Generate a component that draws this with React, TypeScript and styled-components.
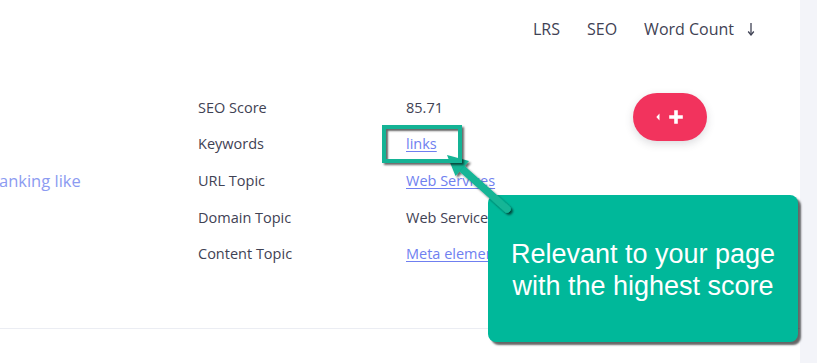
import React from "react";
import styled, { createGlobalStyle } from "styled-components";

const Global = createGlobalStyle`
  html, body { margin: 0; padding: 0; background: #ffffff; }
  body { font-family: "Open Sans", "Noto Sans", sans-serif; overflow: hidden; }
`;

const Page = styled.div`
  position: relative;
  display: flex;
  width: 817px;
  height: 363px;
  overflow: hidden;
  background: #ffffff;
`;

const Main = styled.div`
  width: 800px;
  display: flex;
  flex-direction: column;
`;

const Strip = styled.div`
  flex: 1;
  background: #f3f4f9;
`;

const Header = styled.div`
  height: 58px;
  display: flex;
  align-items: center;
  gap: 27px;
  padding-left: 533px;
  color: #3f4254;
  font-size: 16px;
`;

const HeadItem = styled.span`
  display: inline-flex;
  align-items: center;
  gap: 12px;
  white-space: nowrap;
`;

const Card = styled.div`
  display: grid;
  grid-template-columns: 198px 208px 227px 74px 1fr;
  align-items: start;
  align-content: start;
  padding-top: 31px;
  height: 271px;
  box-sizing: border-box;
  border-bottom: 1px solid #ebedf3;
`;

const Lead = styled.div`
  align-self: center;
  margin-left: -1px;
  font-size: 16.5px;
  color: #8c9bf1;
  white-space: nowrap;
`;

const Details = styled.div`
  grid-column: 2 / span 2;
  display: grid;
  grid-template-columns: 208px 1fr;
  grid-auto-rows: 36.6px;
  align-items: center;
  font-size: 14.5px;
  color: #3f4254;
`;

const Label = styled.span`
  white-space: nowrap;
`;

const Value = styled.span<{ $link?: boolean }>`
  white-space: nowrap;
  color: ${(p) => (p.$link ? "#6f7ff0" : "#3f4254")};
  text-decoration: ${(p) => (p.$link ? "underline" : "none")};
  text-underline-offset: 2px;
`;

const Actions = styled.div`
  margin-top: 4px;
`;

const PillButton = styled.button`
  width: 74px;
  height: 48px;
  border: none;
  border-radius: 24px;
  background: #f2335d;
  box-shadow: 0 3px 8px rgba(60, 60, 80, 0.18);
  display: flex;
  align-items: center;
  justify-content: center;
  padding: 0;
  cursor: pointer;
`;

const Callout = styled.div`
  position: absolute;
  left: 488px;
  top: 195px;
  width: 310px;
  height: 147px;
  border-radius: 8px;
  background: #00b89a;
  box-shadow: 3px 3px 2px rgba(0, 0, 0, 0.6);
  display: flex;
  align-items: center;
  justify-content: center;
  text-align: center;
  color: #ffffff;
  font-family: "Liberation Sans", Arial, sans-serif;
  font-size: 27px;
  line-height: 32px;
  padding-top: 2px;
  box-sizing: border-box;
`;

const Highlight = styled.div`
  position: absolute;
  left: 382px;
  top: 125px;
  width: 80px;
  height: 38px;
  box-sizing: border-box;
  border: 4px solid #14b395;
  box-shadow: 2px 2px 2px rgba(0, 0, 0, 0.6), inset 2px 2px 2px rgba(0, 0, 0, 0.6);
`;

const ArrowLayer = styled.svg`
  position: absolute;
  left: 0;
  top: 0;
  pointer-events: none;
`;

const SortArrow = () => (
  <svg width="10" height="14" viewBox="0 0 10 14">
    <line x1="5" y1="1" x2="5" y2="12" stroke="#3f4254" strokeWidth="1.3" />
    <path d="M2.2 9.5 L5 13 L7.8 9.5" fill="none" stroke="#3f4254" strokeWidth="1.3" />
  </svg>
);

const PlusIcon = () => (
  <svg width="28" height="16" viewBox="0 0 28 16">
    <path d="M3.5 4.5 L0.3 8 L3.5 11.5 Z" fill="#ffffff" />
    <path d="M20 1.2 V14.8 M13.2 8 H26.8" stroke="#ffffff" strokeWidth="3.6" />
  </svg>
);

const rows: { label: string; value: string; link?: boolean }[] = [
  { label: "SEO Score", value: "85.71" },
  { label: "Keywords", value: "links", link: true },
  { label: "URL Topic", value: "Web Services", link: true },
  { label: "Domain Topic", value: "Web Services" },
  { label: "Content Topic", value: "Meta elements", link: true },
];

export default function App() {
  return (
    <>
      <Global />
      <Page>
        <Main>
          <Header>
            <HeadItem>LRS</HeadItem>
            <HeadItem>SEO</HeadItem>
            <HeadItem>
              Word Count <SortArrow />
            </HeadItem>
          </Header>
          <Card>
            <Lead>anking like</Lead>
            <Details>
              {rows.map((r) => (
                <React.Fragment key={r.label}>
                  <Label>{r.label}</Label>
                  <Value $link={r.link}>{r.value}</Value>
                </React.Fragment>
              ))}
            </Details>
            <Actions>
              <PillButton aria-label="Add">
                <PlusIcon />
              </PillButton>
            </Actions>
          </Card>
        </Main>
        <Strip />
        <Callout>
          Relevant to your page
          <br />
          with the highest score
        </Callout>
        <ArrowLayer width="817" height="363" viewBox="0 0 817 363">
          <defs>
            <filter id="sh" x="-20%" y="-20%" width="140%" height="140%">
              <feDropShadow dx="2" dy="2" stdDeviation="1" floodColor="#000" floodOpacity="0.6" />
            </filter>
          </defs>
          <g filter="url(#sh)">
            <line x1="459" y1="166" x2="507" y2="209" stroke="#12b596" strokeWidth="7.5" strokeLinecap="round" />
            <polygon points="447,155 469,161 455.5,176" fill="#12b596" />
          </g>
        </ArrowLayer>
        <Highlight />
      </Page>
    </>
  );
}
